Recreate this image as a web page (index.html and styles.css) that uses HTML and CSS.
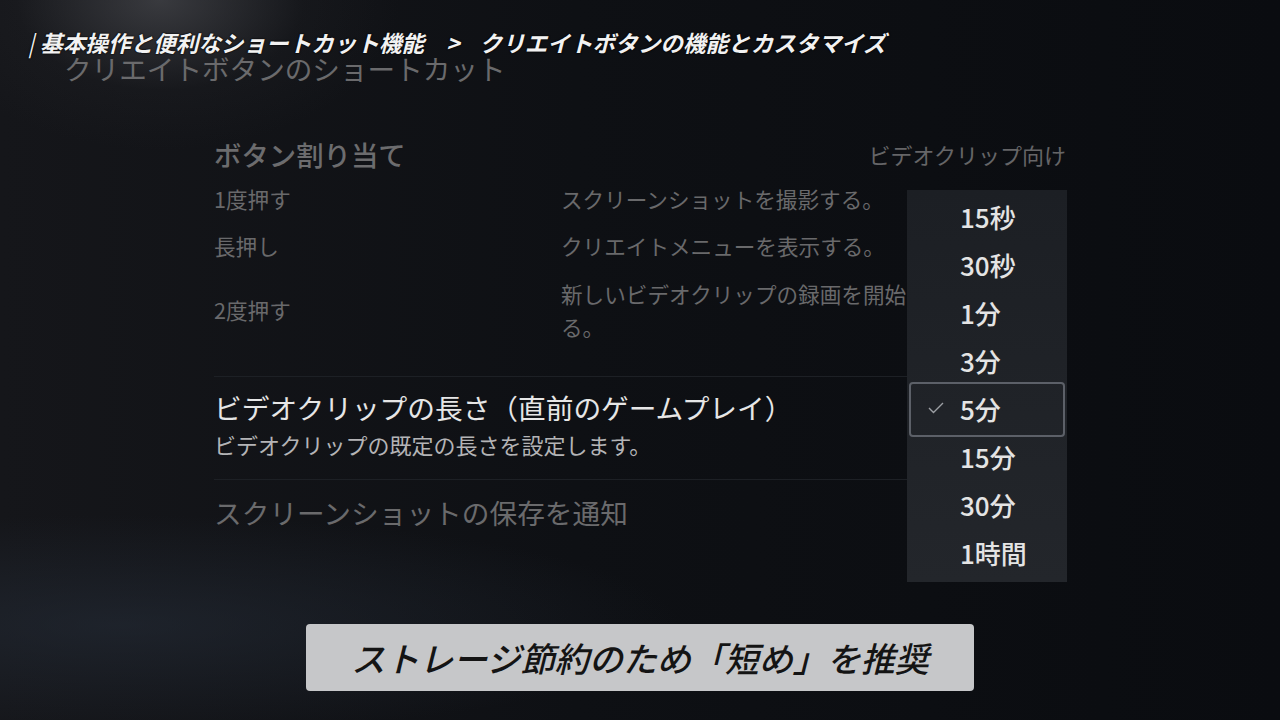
FILE: index.html
```html
<!DOCTYPE html>
<html lang="ja">
<head>
  <meta charset="UTF-8" />
  <meta name="viewport" content="width=device-width, initial-scale=1.0"/>
  <title>クリエイトボタンのショートカット</title>
  <link rel="stylesheet" href="styles.css">
</head>
<body>

  <div class="screen">
    <!-- Breadcrumb & Title -->
    <div class="crumb">
      <span class="bar">|</span>基本操作と便利なショートカット機能<span class="sep">&gt;</span>クリエイトボタンの機能とカスタマイズ
    </div>
    <h1 class="page-title">クリエイトボタンのショートカット</h1>

    <!-- Settings Panel -->
    <div class="panel">
      <div class="assign">
        <div class="assign-head">
          <h2>ボタン割り当て</h2>
          <span class="mode">ビデオクリップ向け</span>
        </div>
        <div class="assign-row">
          <span class="press">1度押す</span>
          <span class="action">スクリーンショットを撮影する。</span>
        </div>
        <div class="assign-row">
          <span class="press">長押し</span>
          <span class="action">クリエイトメニューを表示する。</span>
        </div>
        <div class="assign-row">
          <span class="press">2度押す</span>
          <span class="action">新しいビデオクリップの録画を開始する。</span>
        </div>
      </div>

      <div class="setting active">
        <div class="setting-title">ビデオクリップの長さ（直前のゲームプレイ）</div>
        <div class="setting-sub">ビデオクリップの既定の長さを設定します。</div>
      </div>

      <div class="setting last">
        <div class="setting-title">スクリーンショットの保存を通知</div>
      </div>
    </div>

    <!-- Dropdown -->
    <ul class="dropdown">
      <li>15秒</li>
      <li>30秒</li>
      <li>1分</li>
      <li>3分</li>
      <li class="selected">
        <svg class="check" width="16" height="12" viewBox="0 0 16 12"><polyline points="1,6 5.5,10.5 15,1" fill="none" stroke="#9c9fa4" stroke-width="1.4"/></svg>
        5分
      </li>
      <li>15分</li>
      <li>30分</li>
      <li>1時間</li>
    </ul>

    <!-- Caption -->
    <div class="caption">ストレージ節約のため「短め」を推奨</div>
  </div>

</body>
</html>
```

FILE: styles.css
```css
/* Reset & Base */
* { margin:0; padding:0; box-sizing:border-box; }
html, body { width:100%; height:100%; }
body {
  font-family:"Noto Sans CJK JP","Noto Sans",sans-serif;
  background:#0c0e12;
  overflow:hidden;
}

.screen {
  position:relative;
  width:1280px; height:720px;
  background:
    radial-gradient(ellipse 240px 150px at 160px 0, rgba(88,89,94,0.55), rgba(40,41,45,0.2) 60%, transparent),
    radial-gradient(ellipse 560px 110px at 120px 625px, rgba(38,46,58,0.55), transparent),
    linear-gradient(90deg, #15161a, #0e1014 45%, #0a0c10);
}

/* Breadcrumb & Title */
.crumb {
  padding:31px 0 0 28px;
  font-size:22.6px; line-height:24px;
  font-weight:700; font-style:italic;
  color:#f2f2f2;
  text-shadow:0 0 2px #000,0 0 1px #000;
  white-space:nowrap;
}
.crumb .bar { font-weight:400; margin-right:6px; }
.crumb .sep { margin:0 20px 0 22px; }
.page-title {
  padding-left:64px;
  font-size:27.6px; line-height:26px;
  font-weight:400;
  color:#6a6a6c;
}

/* Settings Panel */
.panel {
  margin:51px 0 0 214px;
  width:852px;
}
.assign {
  padding-bottom:26px;
  border-bottom:1px solid #1d2025;
}
.assign-head {
  display:flex; justify-content:space-between; align-items:center;
  height:43px;
}
.assign-head h2 {
  font-size:27.4px; font-weight:500;
  color:#6c6c6e;
}
.assign-head .mode {
  font-size:22px;
  color:#656567;
}
.assign-row {
  display:flex;
  padding:7.5px 0;
  font-size:21.6px; line-height:32px;
  color:#69696b;
}
.assign-row:last-child { line-height:33px; align-items:center; }
.press { width:347px; flex-shrink:0; }
.action { width:380px; }

.setting {
  padding:13px 0 20px;
  border-bottom:1px solid #1d2025;
}
.setting-title {
  font-size:27.7px; line-height:34px;
  color:#6a6a6c;
}
.setting.active .setting-title { color:#e6e6e6; }
.setting-sub {
  margin-top:5px;
  font-size:22px; line-height:30px;
  color:#b4b4b6;
}
.setting.last { padding-top:15px; border-bottom:none; }

/* Dropdown */
.dropdown {
  position:absolute; left:907px; top:190px;
  width:160px; height:392px;
  padding-top:2px;
  list-style:none;
  background:linear-gradient(#1c1f24,#23262b);
}
.dropdown li {
  position:relative;
  height:48px;
  display:flex; align-items:center;
  padding-left:53px;
  font-size:26px; font-weight:500;
  color:#e4e4e4;
}
.dropdown li.selected::after {
  content:"";
  position:absolute; left:2px; right:2px; top:-2px; bottom:-5px;
  border:2px solid #5c6068;
  border-radius:4px;
}
.check { position:absolute; left:21px; top:18px; }

/* Caption */
.caption {
  position:absolute; left:306px; top:624px;
  width:668px; height:67px;
  display:flex; align-items:center; justify-content:center;
  background:#c6c7c9;
  border-radius:4px;
  font-size:34px; font-style:italic; font-weight:500;
  color:#141414;
}
```
